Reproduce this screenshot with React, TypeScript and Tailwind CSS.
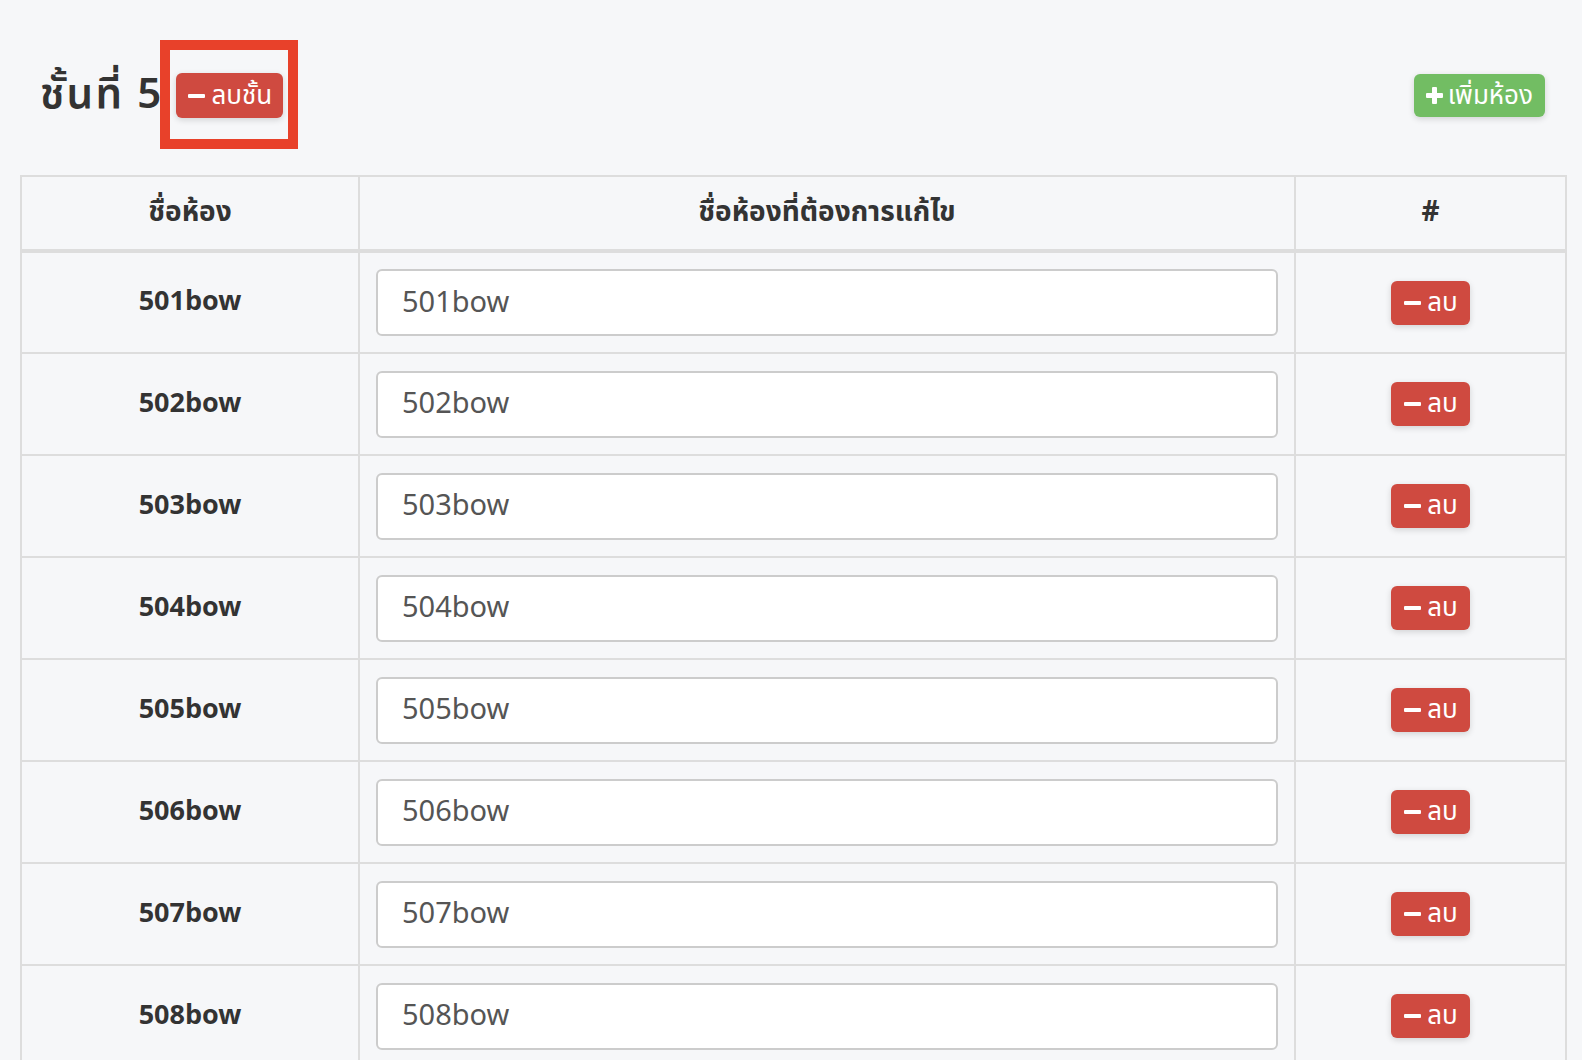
import React from "react";

const rooms = ["501bow", "502bow", "503bow", "504bow", "505bow", "506bow", "507bow", "508bow"];

const font = { fontFamily: '"Noto Sans Thai", "Noto Sans", "Liberation Sans", sans-serif' };

const MinusIcon = () => <span className="inline-block w-[17px] h-[4px] bg-white rounded-[1px]" />;

const PlusIcon = () => (
  <svg width="17" height="17" viewBox="0 0 17 17" className="shrink-0">
    <rect x="6" y="0" width="5" height="17" rx="1" fill="white" />
    <rect x="0" y="6" width="17" height="5" rx="1" fill="white" />
  </svg>
);

const App = () => {
  return (
    <div className="min-h-screen bg-[#F6F7F9] text-[#333333] px-[20px] pt-[73px]" style={font}>
      {/* หัวข้อชั้น */}
      <div className="w-[1545px] flex justify-between items-center h-[45px] px-[20px]">
        <div className="flex items-center">
          <h3 className="text-[42px] leading-[45px] font-semibold tracking-[2.2px]">ชั้นที่ 5</h3>
          <span className="relative ml-[13px]">
            <button className="flex items-center gap-[6px] h-[45px] pl-[12px] pr-[11px] rounded-[6px] bg-[#CF4A40] text-white text-[26px] leading-none shadow-[0_2px_6px_rgba(0,0,0,0.15)]">
              <MinusIcon />
              <span>ลบชั้น</span>
            </button>
            <span className="absolute -left-[16px] -top-[33px] w-[138px] h-[109px] border-[10px] border-[#E8412A] pointer-events-none" />
          </span>
        </div>
        <button className="flex items-center gap-[5px] h-[43px] pl-[12px] pr-[12px] rounded-[6px] bg-[#72BD63] text-white text-[26px] leading-none shadow-[0_2px_6px_rgba(0,0,0,0.15)]">
          <PlusIcon />
          <span>เพิ่มห้อง</span>
        </button>
      </div>

      {/* ตารางห้อง */}
      <table className="w-[1545px] mt-[57px] table-fixed border-collapse border-2 border-[#DDDDDD]">
        <colgroup>
          <col className="w-[338px]" />
          <col className="w-[936px]" />
          <col className="w-[271px]" />
        </colgroup>
        <thead>
          <tr className="h-[75px]">
            <th className="border-2 border-b-4 border-[#DDDDDD] text-[28px] font-bold text-center">ชื่อห้อง</th>
            <th className="border-2 border-b-4 border-[#DDDDDD] text-[28px] font-bold text-center">ชื่อห้องที่ต้องการแก้ไข</th>
            <th className="border-2 border-b-4 border-[#DDDDDD] text-[28px] font-bold text-center">#</th>
          </tr>
        </thead>
        <tbody>
          {rooms.map((room) => (
            <tr key={room} className="h-[102px]">
              <td className="border-2 border-[#DDDDDD] text-center text-[27px] font-bold">{room}</td>
              <td className="border-2 border-[#DDDDDD] px-[16px]">
                <input
                  defaultValue={room}
                  className="w-full h-[67px] bg-white border-2 border-[#CCCCCC] rounded-[6px] pl-[24px] text-[29px] text-[#555555] outline-none"
                  style={font}
                />
              </td>
              <td className="border-2 border-[#DDDDDD]">
                <div className="flex justify-center">
                  <button className="flex items-center gap-[6px] h-[44px] pl-[13px] pr-[12px] rounded-[6px] bg-[#CF4A40] text-white text-[26px] leading-none shadow-[0_2px_6px_rgba(0,0,0,0.15)]">
                    <MinusIcon />
                    <span>ลบ</span>
                  </button>
                </div>
              </td>
            </tr>
          ))}
        </tbody>
      </table>
    </div>
  );
};

export default App;
